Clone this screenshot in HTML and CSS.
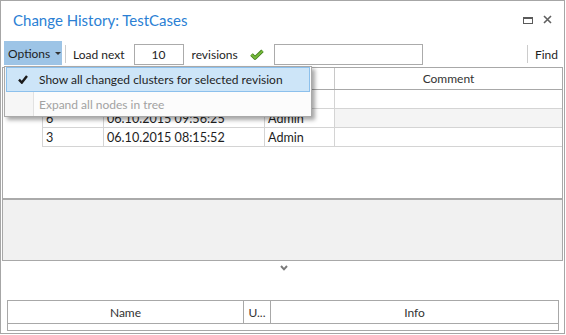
FILE: index.html
```html
<!DOCTYPE html>
<html lang="en">
<head>
    <meta charset="UTF-8">
    <title>Change History</title>
    <link rel="stylesheet" href="styles.css">
</head>
<body>
    <div class="window">
        <div class="titlebar">
            <h1 class="title">Change History: TestCases</h1>
            <div class="win-buttons">
                <svg class="win-max" width="10" height="7" viewBox="0 0 10 7">
                    <rect x="0.5" y="1" width="9" height="5.5" fill="none" stroke="#5a5a5a" stroke-width="1"/>
                    <rect x="0" y="0" width="10" height="2" fill="#5a5a5a"/>
                </svg>
                <svg class="win-close" width="9" height="9" viewBox="0 0 9 9">
                    <path d="M1 1 L8 8 M8 1 L1 8" stroke="#5f5f5f" stroke-width="1.6"/>
                </svg>
            </div>
        </div>

        <div class="toolbar">
            <div class="tb-options">Options <span class="caret"></span></div>
            <span class="tb-sep"></span>
            <span class="tb-label load">Load next</span>
            <input class="tb-count" type="text" value="10">
            <span class="tb-label revs">revisions</span>
            <svg class="tb-check" width="14" height="11" viewBox="0 0 14 11">
                <path d="M1.5 5.5 L5 9 L12.5 1.8" fill="none" stroke="#3f7d1c" stroke-width="3.6" stroke-linejoin="round"/>
                <path d="M1.5 5.5 L5 9 L12.5 1.8" fill="none" stroke="#78bb3c" stroke-width="1.8" stroke-linejoin="round"/>
            </svg>
            <input class="tb-search" type="text">
            <span class="tb-spacer"></span>
            <span class="tb-sep"></span>
            <span class="tb-label find">Find</span>
        </div>

        <div class="upper-pane">
            <div class="grid">
                <!-- first columns and first row sit under the open menu -->
                <div class="grid-row grid-head">
                    <div class="cell"></div>
                    <div class="cell"></div>
                    <div class="cell"></div>
                    <div class="cell">Comment</div>
                </div>
                <div class="grid-row">
                    <div class="cell"></div>
                    <div class="cell"></div>
                    <div class="cell"></div>
                    <div class="cell"></div>
                </div>
                <div class="grid-row alt">
                    <div class="cell">6</div>
                    <div class="cell">06.10.2015 09:56:25</div>
                    <div class="cell">Admin</div>
                    <div class="cell"></div>
                </div>
                <div class="grid-row">
                    <div class="cell">3</div>
                    <div class="cell">06.10.2015 08:15:52</div>
                    <div class="cell">Admin</div>
                    <div class="cell"></div>
                </div>
            </div>
            <div class="band"></div>
        </div>

        <div class="expander">
            <svg width="8" height="6" viewBox="0 0 8 6">
                <path d="M1 1 L4 4.3 L7 1" fill="none" stroke="#7a7a7a" stroke-width="2"/>
            </svg>
        </div>

        <div class="details">
            <div class="details-head">
                <div class="dcell">Name</div>
                <div class="dcell">U...</div>
                <div class="dcell">Info</div>
            </div>
            <div class="details-row"></div>
        </div>

        <div class="options-menu">
            <div class="menu-item checked">
                <span class="menu-icon">
                    <svg width="10" height="9" viewBox="0 0 10 9">
                        <path d="M1 4.6 L3.8 7.6 L9 1" fill="none" stroke="#1a1a1a" stroke-width="2.4"/>
                    </svg>
                </span>
                <span class="menu-text">Show all changed clusters for selected revision</span>
            </div>
            <div class="menu-item disabled">
                <span class="menu-icon"></span>
                <span class="menu-text">Expand all nodes in tree</span>
            </div>
        </div>
    </div>
</body>
</html>
```

FILE: styles.css
```css
body {
    margin: 0;
    background: #ffffff;
    font-family: Lato, "Open Sans", sans-serif;
    color: #1e1e1e;
}
.window {
    position: relative;
    width: 565px;
    height: 334px;
    box-sizing: border-box;
    border: 1px solid #a6a6a6;
    background: #ffffff;
}
.titlebar {
    display: flex;
    align-items: flex-start;
    height: 40px;
}
.title {
    margin: 0;
    padding: 9px 0 0 12px;
    font-size: 15px;
    font-weight: normal;
    line-height: 20px;
    color: #2b7fd4;
}
.win-buttons {
    margin-left: auto;
    display: flex;
    align-items: flex-start;
    gap: 10px;
    padding: 14px 12px 0 0;
}
.win-max {
    margin-top: 2px;
}
.toolbar {
    display: flex;
    align-items: center;
    height: 26px;
    padding-left: 3px;
    font-size: 12px;
}
.tb-options {
    display: flex;
    align-items: center;
    align-self: flex-start;
    width: 58px;
    height: 24px;
    box-sizing: border-box;
    padding-left: 4px;
    background: #9dc4e6;
}
.caret {
    margin-left: 5px;
    border-left: 3px solid transparent;
    border-right: 3px solid transparent;
    border-top: 3px solid #333;
}
.tb-sep {
    width: 1px;
    height: 18px;
    background: #cccccc;
    margin-left: 3px;
}
.tb-label.load {
    margin-left: 7px;
}
.tb-count {
    width: 50px;
    height: 21px;
    box-sizing: border-box;
    margin-left: 9px;
    border: 1px solid #ababab;
    padding: 0;
    text-align: center;
    font-family: inherit;
    font-size: 12px;
    color: #1e1e1e;
}
.tb-label.revs {
    margin-left: 8px;
}
.tb-check {
    margin-left: 12px;
}
.tb-search {
    width: 149px;
    height: 21px;
    box-sizing: border-box;
    margin-left: 10px;
    border: 1px solid #ababab;
    padding: 0;
}
.tb-spacer {
    flex: 1;
}
.tb-label.find {
    margin-left: 7px;
    margin-right: 6px;
}
.upper-pane {
    margin: 0 1px;
    border: 1px solid #a8a8a8;
}
.grid {
    height: 130px;
    font-size: 12.6px;
}
.grid-row {
    display: grid;
    grid-template-columns: 61px 161px 70px 1fr;
    height: 19px;
    box-sizing: border-box;
    margin-left: 39px;
    border-left: 1px solid #d4d4d4;
    border-bottom: 1px solid #d4d4d4;
}
.grid-row .cell {
    display: flex;
    align-items: center;
    padding-left: 3px;
    border-right: 1px solid #d4d4d4;
    white-space: nowrap;
    overflow: hidden;
}
.grid-row .cell:last-child {
    border-right: none;
}
.grid-row.alt .cell:last-child {
    background: #f4f4f4;
}
.grid-head {
    height: 22px;
    border-bottom: 1px solid #a8a8a8;
    font-size: 12px;
    color: #333333;
}
.grid-head .cell {
    justify-content: center;
    padding-left: 0;
    border-right-color: #c8c8c8;
}
.band {
    height: 60px;
    border-top: 2px solid #aaaaaa;
    background: #f1f1f1;
}
.expander {
    display: flex;
    justify-content: center;
    align-items: flex-start;
    height: 39px;
    padding-left: 2px;
    box-sizing: border-box;
    padding-top: 4px;
}
.details {
    margin: 0 5px 0 6px;
    border: 1px solid #a8a8a8;
    font-size: 12px;
    color: #333333;
}
.details-head {
    display: grid;
    grid-template-columns: 236px 27px 1fr;
    height: 22px;
    border-bottom: 1px solid #a8a8a8;
}
.dcell {
    display: flex;
    align-items: center;
    justify-content: center;
    border-right: 1px solid #a8a8a8;
}
.dcell:last-child {
    border-right: none;
}
.details-row {
    height: 6px;
}
.options-menu {
    position: absolute;
    left: 3px;
    top: 65px;
    width: 308px;
    box-sizing: border-box;
    padding: 0 1px;
    border: 1px solid #a9a9a9;
    background: linear-gradient(to right, #f6f6f6 28px, #e2e2e2 28px, #e2e2e2 29px, #fcfcfc 29px);
    box-shadow: 3px 3px 4px rgba(0, 0, 0, 0.35);
    font-size: 12px;
}
.menu-item {
    display: flex;
    align-items: center;
    height: 24px;
    box-sizing: border-box;
    border: 1px solid transparent;
}
.menu-item.checked {
    height: 25px;
    background: #cde5f8;
    border-color: #8cc0ec;
}
.menu-item.disabled {
    color: #a2a2a2;
}
.menu-icon {
    display: flex;
    justify-content: center;
    width: 32px;
}
.menu-text {
    white-space: nowrap;
}
```
